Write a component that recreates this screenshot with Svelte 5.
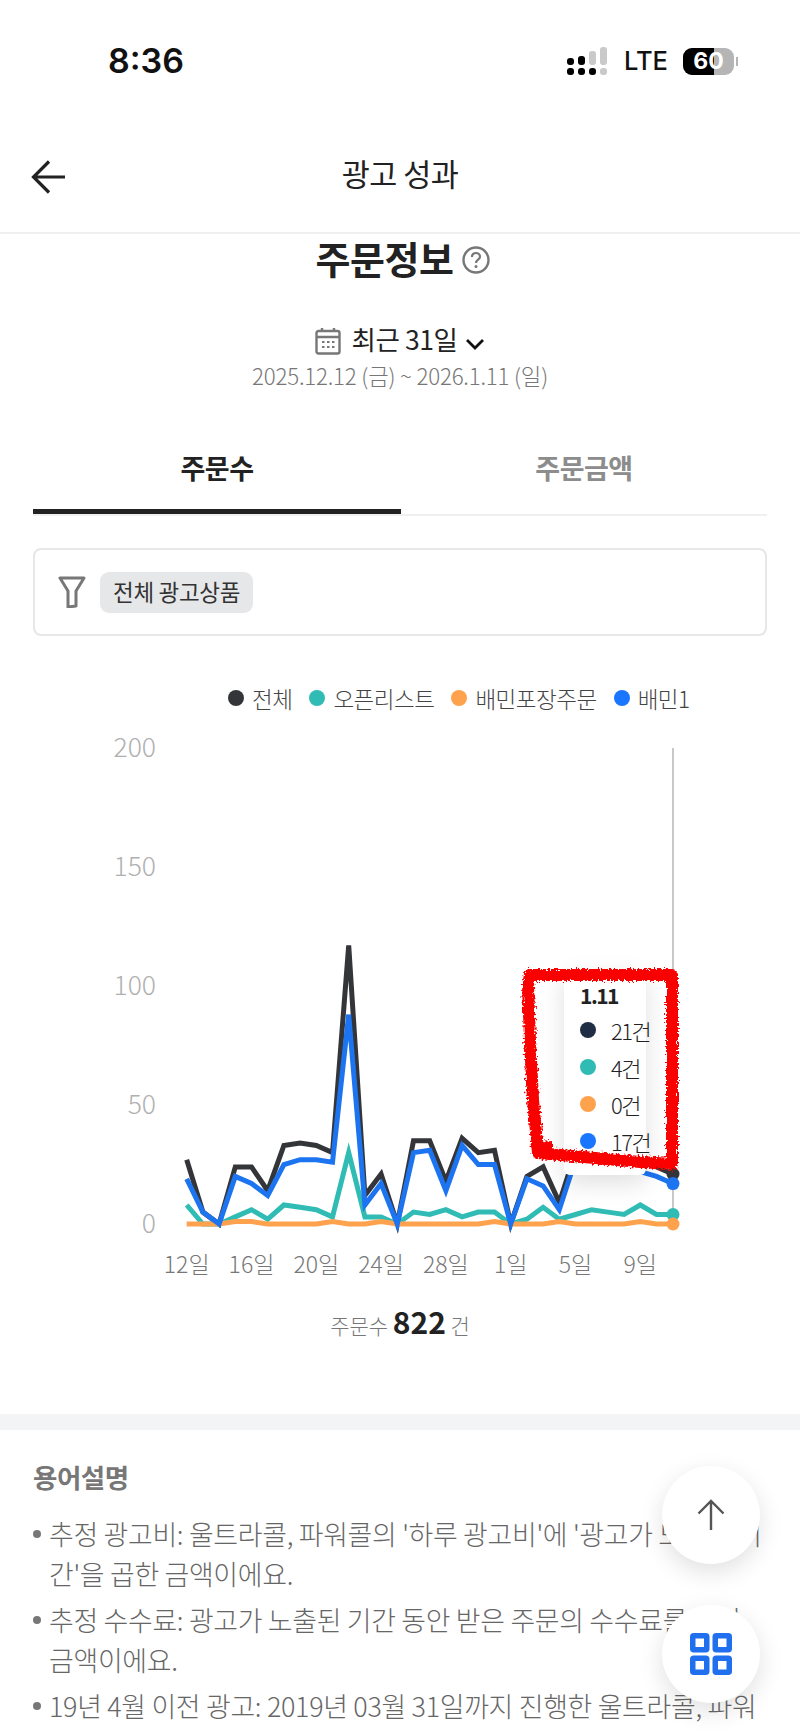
<script lang="ts">
  const total = [27, 5, 0, 24, 24, 14, 33, 34, 33, 30, 117, 12, 21, 0, 35, 35, 18, 36, 30, 31, 0, 20, 24, 9, 30, 30, 28, 27, 26, 24, 21]
  const teal = [8, 0, 0, 3, 6, 2, 8, 7, 6, 3, 30, 3, 3, 0, 5, 4, 6, 3, 5, 5, 0, 2, 7, 2, 4, 6, 5, 4, 8, 4, 4]
  const orange = [0, 0, 0, 1, 1, 0, 0, 0, 0, 1, 0, 0, 1, 0, 0, 0, 0, 0, 0, 1, 0, 0, 0, 1, 0, 0, 0, 0, 1, 0, 0]
  const blue = [19, 5, 0, 20, 17, 12, 25, 27, 27, 26, 88, 8, 17, 0, 30, 31, 14, 33, 25, 25, 0, 19, 16, 6, 27, 27, 25, 24, 22, 20, 17]

  const px = (i: number) => 186.7 + i * 16.2
  const py = (v: number) => 1224 - v * 2.38
  const line = (d: number[]) => d.map((v, i) => `${px(i).toFixed(1)},${py(v).toFixed(1)}`).join(' ')

  const series = [
    { data: total, color: '#333538' },
    { data: teal, color: '#30bcb4' },
    { data: orange, color: '#ffa24d' },
    { data: blue, color: '#1d74f0' }
  ]
  const yTicks = [200, 150, 100, 50, 0]
  const xTicks = [
    { i: 0, t: '12일' },
    { i: 4, t: '16일' },
    { i: 8, t: '20일' },
    { i: 12, t: '24일' },
    { i: 16, t: '28일' },
    { i: 20, t: '1일' },
    { i: 24, t: '5일' },
    { i: 28, t: '9일' }
  ]
  const legend = [
    { t: '전체', c: '#333538' },
    { t: '오픈리스트', c: '#30bcb4' },
    { t: '배민포장주문', c: '#ffa24d' },
    { t: '배민1', c: '#1b76ff' }
  ]
  const tips = [
    { t: '21건', c: '#1f2d45' },
    { t: '4건', c: '#30bcb4' },
    { t: '0건', c: '#ffa24d' },
    { t: '17건', c: '#1b76ff' }
  ]
  const terms = [
    "추정 광고비: 울트라콜, 파워콜의 '하루 광고비'에 '광고가 노출된 기간'을 곱한 금액이에요.",
    '추정 수수료: 광고가 노출된 기간 동안 받은 주문의 수수료를 합한 금액이에요.',
    '19년 4월 이전 광고: 2019년 03월 31일까지 진행한 울트라콜, 파워콜, 슈퍼리스트 광고예요.'
  ]
</script>

<div class="page">
  <div class="status">
    <span class="time">8:36</span>
    <div class="status-right">
      <svg width="42" height="28" viewBox="0 0 42 28">
        <g fill="#000">
          <rect x="0" y="11" width="7" height="7" rx="3" />
          <rect x="0" y="21" width="7" height="7" rx="3" />
          <rect x="11" y="9" width="7" height="9" rx="3" />
          <rect x="11" y="21" width="7" height="7" rx="3" />
          <rect x="22" y="21" width="7" height="7" rx="3" />
        </g>
        <g fill="#c9c9c9">
          <rect x="22" y="4" width="7" height="14" rx="3" />
          <rect x="33" y="0" width="7" height="18" rx="3" />
          <rect x="33" y="21" width="7" height="7" rx="3" />
        </g>
      </svg>
      <span class="lte">LTE</span>
      <div class="battery">
        <span class="level"></span>
        <span class="num">60</span>
        <i class="cap"></i>
      </div>
    </div>
  </div>

  <header class="nav">
    <svg class="back" width="36" height="34" viewBox="0 0 36 34" fill="none" stroke="#222" stroke-width="3.2">
      <path d="M34 17H3M18 1.500 2.500 17 18 32.500" />
    </svg>
    <span>광고 성과</span>
  </header>

  <section class="summary">
    <h1>
      주문정보
      <svg width="28" height="28" viewBox="0 0 28 28" fill="none">
        <circle cx="14" cy="14" r="12.500" stroke="#777" stroke-width="2.400" />
        <path d="M10 11c0-2.500 1.800-4 4-4s4 1.500 4 3.700c0 3-4 3-4 6.300" stroke="#777" stroke-width="2.200" />
        <circle cx="14" cy="20.500" r="1.500" fill="#777" />
      </svg>
    </h1>
    <div class="range">
      <svg width="26" height="28" viewBox="0 0 26 28" fill="none">
        <rect x="1.500" y="4" width="23" height="22.500" rx="2" stroke="#777" stroke-width="2.400" />
        <path d="M1.500 10h23M7 1v4M19 1v4" stroke="#777" stroke-width="2.400" />
        <path d="M7 15h2.500M12 15h2.500M17 15h2.500M7 20h2.500M12 20h2.500M17 20h2.500" stroke="#777" stroke-width="2" />
      </svg>
      <strong>최근 31일</strong>
      <svg width="20" height="12" viewBox="0 0 20 12" fill="none" stroke="#111" stroke-width="2.800">
        <path d="M2 2l8 8 8-8" />
      </svg>
    </div>
    <div class="dates">2025.12.12 (금) ~ 2026.1.11 (일)</div>
  </section>

  <div class="tabs">
    <div class="tab active">주문수</div>
    <div class="tab">주문금액</div>
  </div>

  <div class="filter">
    <svg width="28" height="32" viewBox="0 0 28 32" fill="none" stroke="#777" stroke-width="3" stroke-linejoin="round">
      <path d="M2 2h24L18 15v15l-8 1V15z" />
    </svg>
    <span class="chip">전체 광고상품</span>
  </div>

  <div class="legend">
    {#each legend as l}
      <span class="item"><i style="background:{l.c}"></i>{l.t}</span>
    {/each}
  </div>

  <div class="chart">
    <svg width="800" height="560" viewBox="0 730 800 560">
      {#each yTicks as v}
        <text class="tick" x="156" y={py(v) + 9} text-anchor="end">{v}</text>
      {/each}
      {#each xTicks as x}
        <text class="tick dark" x={px(x.i)} y="1273" text-anchor="middle">{x.t}</text>
      {/each}
      <line x1="673" y1="748" x2="673" y2="1224" stroke="#c8c8c8" stroke-width="2" />
      {#each series as s}
        <polyline points={line(s.data)} fill="none" stroke={s.color} stroke-width="5" stroke-miterlimit="10" />
      {/each}
      {#each series as s}
        <circle cx="673" cy={py(s.data[30])} r="6.500" fill={s.color} />
      {/each}
    </svg>

    <div class="tooltip">
      <b>1.11</b>
      {#each tips as t}
        <div class="row"><i style="background:{t.c}"></i>{t.t}</div>
      {/each}
    </div>

    <svg class="scribble" width="800" height="560" viewBox="0 730 800 560" fill="none">
      <defs>
        <filter id="rough" x="-10%" y="-10%" width="120%" height="120%">
          <feTurbulence type="fractalNoise" baseFrequency="0.5" numOctaves="2" seed="4" />
          <feDisplacementMap in="SourceGraphic" scale="8" />
        </filter>
      </defs>
      <path
        d="M530 975H672V1164L640 1162 538 1153 533 1100 530 1040 528 985z"
        stroke="#fb0000"
        stroke-width="12"
        stroke-linejoin="round"
        filter="url(#rough)"
      />
      <path d="M530 1143 552 1141 552 1160 535 1156z" fill="#fb0000" filter="url(#rough)" />
    </svg>
  </div>

  <div class="count">주문수 <b>822</b> 건</div>

  <div class="band"></div>

  <section class="terms">
    <h2>용어설명</h2>
    <ul>
      {#each terms as t}
        <li>{t}</li>
      {/each}
    </ul>
  </section>

  <button class="fab up" aria-label="위로">
    <svg width="28" height="32" viewBox="0 0 28 32" fill="none" stroke="#555" stroke-width="2.400">
      <path d="M14 31V2M1.500 14.500 14 2l12.500 12.500" />
    </svg>
  </button>
  <button class="fab grid" aria-label="메뉴">
    <svg width="42" height="42" viewBox="0 0 42 42" fill="none" stroke="#1f6fef" stroke-width="5.500">
      <rect x="2.750" y="2.750" width="14" height="14" rx="1" />
      <rect x="25.250" y="2.750" width="14" height="14" rx="1" />
      <rect x="2.750" y="25.250" width="14" height="14" rx="1" />
      <rect x="25.250" y="25.250" width="14" height="14" rx="1" />
    </svg>
  </button>
</div>

<style>
  :global(body) {
    margin: 0;
    background: #fff;
  }
  .page {
    position: relative;
    width: 800px;
    height: 1734px;
    overflow: hidden;
    background: #fff;
    color: #222;
    font-family: 'Noto Sans CJK KR', 'Noto Sans', sans-serif;
  }
  .status {
    height: 110px;
    box-sizing: border-box;
    padding: 41px 66px 0 108px;
    display: flex;
    justify-content: space-between;
    align-items: flex-start;
  }
  .time {
    font-family: Inter, sans-serif;
    font-size: 34px;
    line-height: 36px;
    font-weight: 600;
    color: #111;
    margin-top: 2px;
  }
  .status-right {
    display: flex;
    align-items: center;
    height: 36px;
    margin-top: 2px;
  }
  .lte {
    font-family: Inter, sans-serif;
    font-size: 25.500px;
    font-weight: 500;
    color: #111;
    margin: 0 15px 0 15px;
    line-height: 36px;
  }
  .battery {
    position: relative;
    width: 51px;
    height: 27px;
    border-radius: 9px;
    background: #b5b5b5;
    overflow: visible;
  }
  .level {
    position: absolute;
    left: 0;
    top: 0;
    bottom: 0;
    width: 31px;
    background: #000;
    border-radius: 9px 0 0 9px;
  }
  .num {
    position: absolute;
    left: 0;
    right: 0;
    top: 0;
    text-align: center;
    font-family: Inter, sans-serif;
    font-size: 23px;
    line-height: 27px;
    font-weight: 700;
    color: #fff;
  }
  .cap {
    position: absolute;
    right: -4px;
    top: 9px;
    width: 2px;
    height: 9px;
    background: #b5b5b5;
  }
  .nav {
    position: relative;
    height: 124px;
    box-sizing: border-box;
    border-bottom: 2px solid #f0f0f0;
    padding-top: 41px;
    text-align: center;
    font-size: 30.500px;
    line-height: 44px;
    color: #222;
    letter-spacing: -0.5px;
  }
  .back {
    position: absolute;
    left: 31px;
    top: 50px;
  }
  .summary {
    text-align: center;
  }
  h1 {
    margin: 0;
    padding-left: 6px;
    height: 48px;
    font-size: 38px;
    line-height: 46px;
    font-weight: 700;
    color: #222;
    display: flex;
    justify-content: center;
    align-items: center;
    gap: 9px;
    letter-spacing: -0.5px;
  }
  h1 svg {
    margin-top: 4px;
  }
  .range {
    margin-top: 39px;
    height: 40px;
    display: flex;
    justify-content: center;
    align-items: center;
    gap: 10px;
  }
  .range strong {
    font-weight: 400;
    font-size: 26.500px;
    letter-spacing: -0.4px;
    color: #222;
    margin-top: -5px;
  }
  .range svg:last-child {
    margin: 5px 0 0 -3px;
  }
  .dates {
    margin-top: -2px;
    font-size: 22.300px;
    line-height: 32px;
    font-weight: 300;
    color: #777;
    letter-spacing: -0.2px;
  }
  .tabs {
    margin: 53px 33px 0;
    display: grid;
    grid-template-columns: 368px 1fr;
    border-bottom: 2px solid #f0f0f0;
  }
  .tab {
    height: 70px;
    box-sizing: border-box;
    padding-top: 4px;
    text-align: center;
    font-size: 27px;
    line-height: 40px;
    font-weight: 700;
    color: #8c8c8c;
    letter-spacing: -0.5px;
  }
  .tab.active {
    color: #222;
    border-bottom: 5px solid #222;
    margin-bottom: -1px;
  }
  .filter {
    margin: 32px 33px 0;
    height: 88px;
    box-sizing: border-box;
    border: 2px solid #e6e7e9;
    border-radius: 8px;
    display: flex;
    align-items: center;
    gap: 14px;
    padding-left: 23px;
  }
  .chip {
    background: #e6e7e9;
    border-radius: 9px;
    height: 41px;
    line-height: 38px;
    padding: 0 13px;
    font-size: 22.500px;
    color: #333;
    letter-spacing: -0.3px;
  }
  .legend {
    margin-top: 44px;
    padding-left: 228px;
    display: flex;
    gap: 17px;
    height: 36px;
    align-items: center;
  }
  .item {
    display: flex;
    align-items: center;
    gap: 8px;
    font-size: 22.500px;
    font-weight: 300;
    color: #444;
    letter-spacing: -0.5px;
  }
  .item i {
    width: 16px;
    height: 16px;
    border-radius: 50%;
  }
  .chart {
    position: relative;
    height: 560px;
    margin-top: 14px;
  }
  .chart > svg {
    display: block;
  }
  .tick {
    font-size: 26.500px;
    font-weight: 300;
    fill: #b0b0b0;
  }
  .tick.dark {
    fill: #777;
    font-size: 23px;
  }
  .tooltip {
    position: absolute;
    left: 564px;
    top: 240px;
    width: 82px;
    height: 205px;
    box-sizing: border-box;
    padding: 9px 0 0 16px;
    background: #fff;
    border-radius: 6px;
    box-shadow: 0 8px 24px rgba(0, 0, 0, 0.13);
    font-size: 22px;
    color: #222;
  }
  .tooltip b {
    display: block;
    font-size: 21px;
    line-height: 32px;
    font-weight: 700;
    letter-spacing: -1.5px;
  }
  .row {
    display: flex;
    align-items: center;
    gap: 15px;
    height: 37px;
    font-weight: 300;
    white-space: nowrap;
    letter-spacing: -1.500px;
  }
  .row i {
    flex: none;
    width: 16px;
    height: 16px;
    border-radius: 50%;
  }
  .scribble {
    position: absolute;
    left: 0;
    top: 0;
    pointer-events: none;
  }
  .count {
    margin-top: 11px;
    text-align: center;
    font-size: 21px;
    line-height: 40px;
    font-weight: 300;
    color: #777;
  }
  .count b {
    font-size: 30px;
    font-weight: 700;
    color: #222;
  }
  .band {
    margin-top: 69px;
    height: 16px;
    background: #f3f4f6;
  }
  .terms {
    padding: 27px 33px 0 33px;
  }
  h2 {
    margin: 0 0 17px;
    font-size: 26.500px;
    line-height: 40px;
    font-weight: 700;
    color: #777;
    letter-spacing: -0.5px;
  }
  ul {
    margin: 0;
    padding: 0;
    list-style: none;
  }
  li {
    position: relative;
    padding-left: 16px;
    margin-bottom: 6px;
    font-size: 26.900px;
    line-height: 40px;
    font-weight: 300;
    color: #666;
    word-break: break-all;
    letter-spacing: -0.3px;
  }
  li::before {
    content: '';
    position: absolute;
    left: 0;
    top: 16px;
    width: 8px;
    height: 8px;
    border-radius: 50%;
    background: #777;
  }
  .fab {
    position: absolute;
    left: 662px;
    width: 98px;
    height: 98px;
    padding: 0;
    border: 0;
    border-radius: 50%;
    background: #fff;
    box-shadow: 0 8px 24px rgba(0, 0, 0, 0.12);
    display: flex;
    align-items: center;
    justify-content: center;
  }
  .up {
    top: 1466px;
  }
  .grid {
    top: 1605px;
  }
</style>
